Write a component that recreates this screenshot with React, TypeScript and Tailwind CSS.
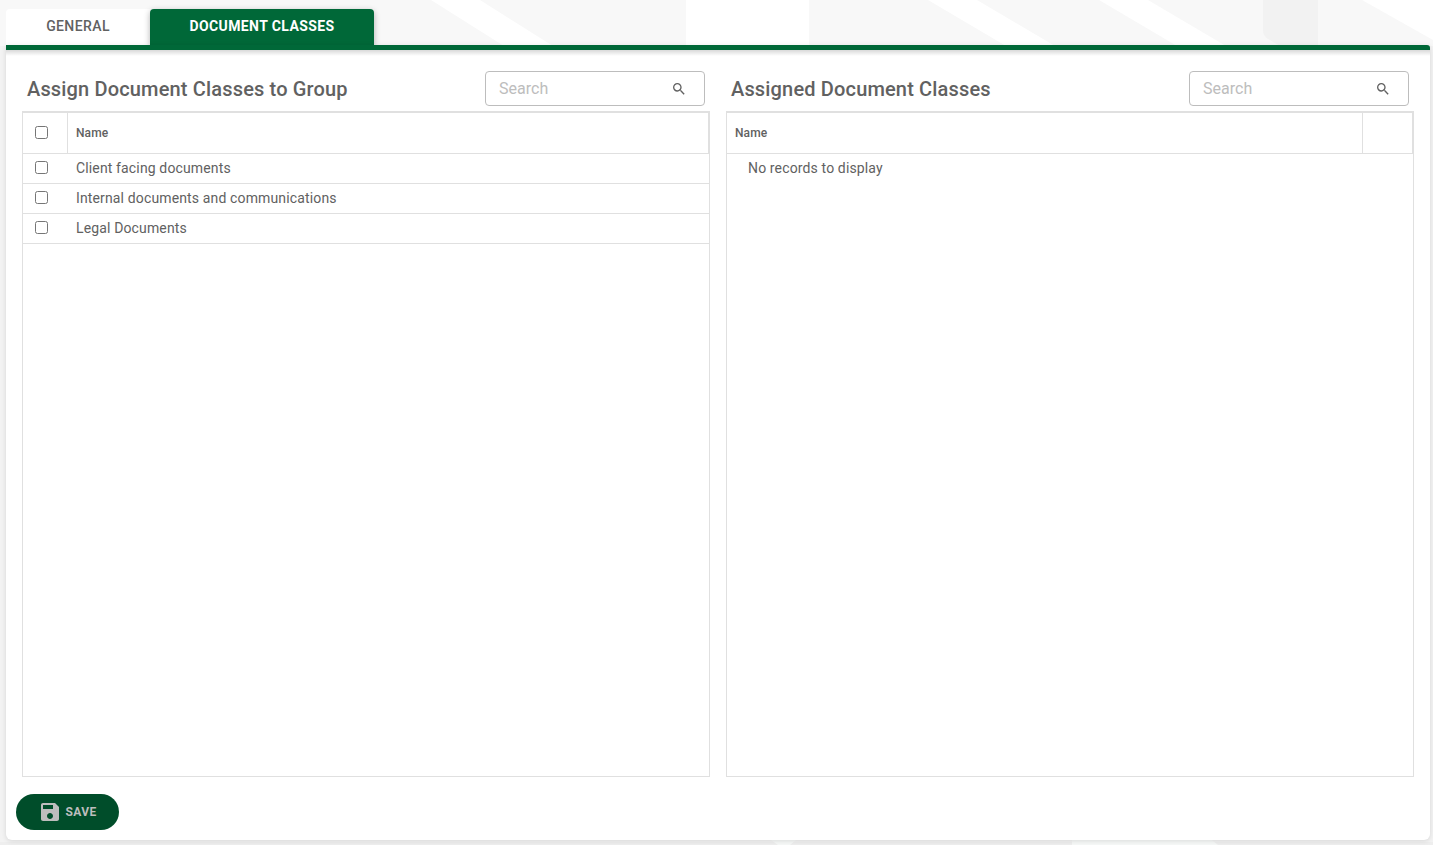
const rows = ['Client facing documents', 'Internal documents and communications', 'Legal Documents'];

function Checkbox() {
  return <input type="checkbox" className="w-[13px] h-[13px] appearance-none bg-white border border-[#767676] rounded-[2.5px] block" />;
}

function SearchIcon() {
  return (
    <svg width="16" height="16" viewBox="0 0 24 24" fill="#616161">
      <path d="M15.5 14h-.79l-.28-.27A6.471 6.471 0 0 0 16 9.5 6.5 6.5 0 1 0 9.5 16c1.61 0 3.09-.59 4.23-1.57l.27.28v.79l5 4.99L20.49 19l-4.99-5zm-6 0C7.01 14 5 11.99 5 9.5S7.01 5 9.5 5 14 7.01 14 9.5 11.99 14 9.5 14z" />
    </svg>
  );
}

function SaveIcon() {
  return (
    <svg width="24" height="24" viewBox="0 0 24 24" fill="#bdbdbd">
      <path d="M17 3H5c-1.11 0-2 .9-2 2v14c0 1.1.89 2 2 2h14c1.1 0 2-.9 2-2V7l-4-4zm-5 16c-1.66 0-3-1.34-3-3s1.34-3 3-3 3 1.34 3 3-1.34 3-3 3zm3-10H5V5h10v4z" />
    </svg>
  );
}

function SearchBox() {
  return (
    <div className="w-[220px] h-[35px] border border-[#bdbdbd] rounded-[4px] bg-white flex items-center pl-[13px] pr-[17px] justify-between">
      <span className="text-[16px] tracking-[0.03px] text-[#bdbdbd] mt-[1px]">Search</span>
      <SearchIcon />
    </div>
  );
}

function PanelHeader({ title }: { title: string }) {
  return (
    <div className="h-[35px] mb-[5px] flex items-center justify-between px-[5px]">
      <h2 className="text-[20px] font-medium tracking-[0.16px] text-[#616161] leading-[24px]">{title}</h2>
      <SearchBox />
    </div>
  );
}

export default function App() {
  return (
    <div className="relative h-[845px] overflow-hidden bg-[#f3f3f3] font-['Roboto',sans-serif] pl-[6px] pr-[3px] pt-[9px] pb-[5px] flex flex-col">
      {/* background pattern */}
      <svg className="absolute inset-0 w-full h-full" viewBox="0 0 1433 845">
        <rect x="0" y="0" width="1433" height="46" fill="#f8f8f8" />
        <polygon points="431,0 480,0 553,46 504,46" fill="#ffffff" />
        <rect x="686" y="0" width="123" height="46" fill="#ffffff" />
        <polygon points="928,0 977,0 1055,46 1006,46" fill="#ffffff" />
        <polygon points="1099,0 1148,0 1226,46 1177,46" fill="#ffffff" />
        <path d="M1263 0H1318V46H1280L1268 39Q1263 36 1263 30Z" fill="#f2f2f2" />
        <polygon points="1362,0 1433,0 1433,40" fill="#ffffff" />
        <rect x="0" y="842" width="1433" height="3" fill="#eeeeee" />
        <polygon points="771,840 796,840 790,845 778,845" fill="#f6f8f7" />
        <polygon points="1072,840 1212,840 1218,845 1072,845" fill="#f6f8f7" />
      </svg>

      <div className="relative flex h-[36px] shrink-0">
        <div className="w-[144px] bg-white rounded-tl-[4px] flex items-center justify-center pb-[1px] text-[14px] font-medium tracking-[0.4px] text-[#616161]">GENERAL</div>
        <div className="w-[224px] bg-[#006838] rounded-t-[4px] flex items-center justify-center pb-[1px] text-[14px] font-bold tracking-[0.4px] text-white shadow-[0_2px_6px_rgba(0,0,0,0.3)]">DOCUMENT CLASSES</div>
      </div>

      <div className="relative flex-1 bg-white rounded-b-[6px] rounded-tr-[3px] border-t-[5px] border-[#006838] flex flex-col shadow-[0_1px_5px_rgba(0,0,0,0.12)]">
        <div className="absolute left-0 right-0 top-0 h-[6px] bg-gradient-to-b from-black/15 to-transparent" />
        <div className="flex gap-[16px] px-[16px] pt-[21px]">
          <section className="w-[688px] flex flex-col">
            <PanelHeader title="Assign Document Classes to Group" />
            <div className="h-[666px] border border-[#e0e0e0]">
              <div className="h-[42px] flex items-stretch border-t border-[#e0e0e0] border-b border-b-[#e0e0e0] border-r border-r-[#e0e0e0] text-[12px] font-medium tracking-[0.08px] text-[#616161]">
                <div className="w-[45px] border-r border-[#e0e0e0] flex items-center pl-[12px] pb-[1px]"><Checkbox /></div>
                <div className="flex items-center pl-[8px]">Name</div>
              </div>
              {rows.map((row) => (
                <div key={row} className="h-[30px] flex items-center border-b border-[#e0e0e0] text-[14px] tracking-[0.14px] text-[#616161]">
                  <div className="w-[45px] pl-[12px] mb-[2px]"><Checkbox /></div>
                  <div className="pl-[8px]">{row}</div>
                </div>
              ))}
            </div>
          </section>
          <section className="w-[688px] flex flex-col">
            <PanelHeader title="Assigned Document Classes" />
            <div className="h-[666px] border border-[#e0e0e0]">
              <div className="h-[42px] flex items-stretch border-t border-[#e0e0e0] border-b border-b-[#e0e0e0] border-r border-r-[#e0e0e0] text-[12px] font-medium tracking-[0.08px] text-[#616161]">
                <div className="flex-1 flex items-center pl-[8px]">Name</div>
                <div className="w-[50px] border-l border-[#e0e0e0]" />
              </div>
              <div className="h-[29px] flex items-center pl-[21px] text-[14px] tracking-[0.14px] text-[#616161]">No records to display</div>
            </div>
          </section>
        </div>
        <div className="pl-[10px] pt-[17px]">
          <button className="w-[103px] h-[36px] rounded-full bg-[#004d2a] flex items-center justify-center gap-[3px] text-[12px] font-bold tracking-[0.4px] text-[#bdbdbd]">
            <SaveIcon />
            SAVE
          </button>
        </div>
      </div>
    </div>
  );
}
